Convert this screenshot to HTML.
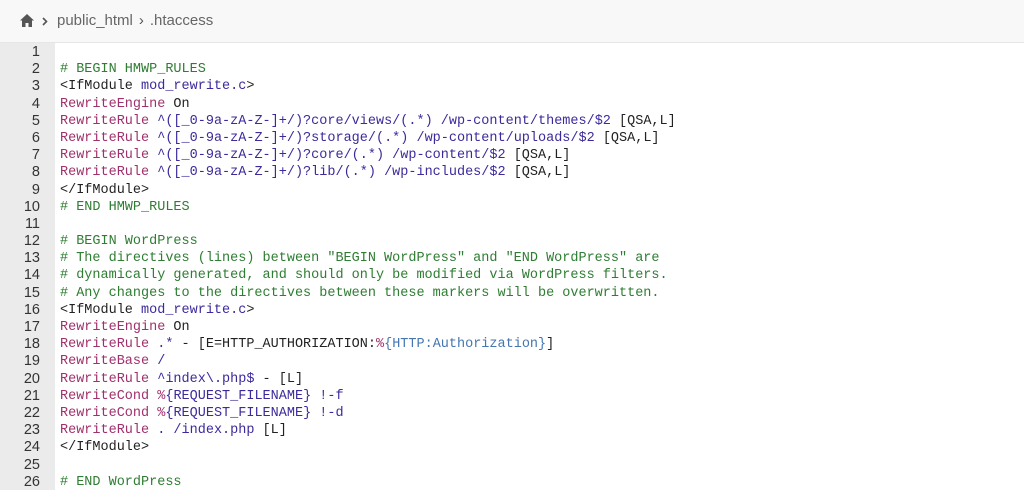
<!DOCTYPE html>
<html><head><meta charset="utf-8"><style>
body{margin:0;width:1024px;height:490px;overflow:hidden;background:#fff;font-family:"Liberation Sans",sans-serif}
.hdr{height:42px;background:#f8f8f8;border-bottom:1px solid #e6e6e6;position:relative}
.hdr .t{position:absolute;left:57px;top:12px;font-size:15px;color:#666}
.hdr .s{display:inline-block;margin:0 6px;color:#555}
.gut{position:absolute;left:0;top:43px;width:55px;height:447px;background:#ebebeb}
.nums{position:absolute;left:0;top:44px;width:40px;text-align:right;font-size:14.5px;line-height:17.2px;color:#333}
.nums div,.code div{height:17.2px}
.code{position:absolute;left:60px;top:44px;font-family:"Liberation Mono",monospace;font-size:13.5px;line-height:17.2px;color:#222}
.code div{white-space:pre}
.c{color:#2e7d32}.k{color:#a0306c}.b{color:#3c2a9c}.v{color:#4576b0}
</style></head><body>
<div class="hdr">
<svg style="position:absolute;left:19px;top:13px" width="16" height="15" viewBox="0 0 16 15"><path d="M8 1 L1 7.5 H3 V14 H6.5 V10 H9.5 V14 H13 V7.5 H15 Z" fill="#555"/></svg>
<svg style="position:absolute;left:42px;top:17px" width="6" height="9" viewBox="0 0 6 9"><path d="M1 1 L4.5 4.5 L1 8" stroke="#555" stroke-width="1.6" fill="none"/></svg>
<span class="t">public_html<span class="s">›</span>.htaccess</span>
</div>
<div class="gut"></div>
<div class="nums"><div>1</div><div>2</div><div>3</div><div>4</div><div>5</div><div>6</div><div>7</div><div>8</div><div>9</div><div>10</div><div>11</div><div>12</div><div>13</div><div>14</div><div>15</div><div>16</div><div>17</div><div>18</div><div>19</div><div>20</div><div>21</div><div>22</div><div>23</div><div>24</div><div>25</div><div>26</div></div>
<div class="code"><div> </div><div><span class="c"># BEGIN HMWP_RULES</span></div><div>&lt;IfModule <span class="b">mod_rewrite.c</span>&gt;</div><div><span class="k">RewriteEngine</span> On</div><div><span class="k">RewriteRule</span> <span class="b">^([_0-9a-zA-Z-]+/)?core/views/(.*) /wp-content/themes/$2</span> [QSA,L]</div><div><span class="k">RewriteRule</span> <span class="b">^([_0-9a-zA-Z-]+/)?storage/(.*) /wp-content/uploads/$2</span> [QSA,L]</div><div><span class="k">RewriteRule</span> <span class="b">^([_0-9a-zA-Z-]+/)?core/(.*) /wp-content/$2</span> [QSA,L]</div><div><span class="k">RewriteRule</span> <span class="b">^([_0-9a-zA-Z-]+/)?lib/(.*) /wp-includes/$2</span> [QSA,L]</div><div>&lt;/IfModule&gt;</div><div><span class="c"># END HMWP_RULES</span></div><div> </div><div><span class="c"># BEGIN WordPress</span></div><div><span class="c"># The directives (lines) between "BEGIN WordPress" and "END WordPress" are</span></div><div><span class="c"># dynamically generated, and should only be modified via WordPress filters.</span></div><div><span class="c"># Any changes to the directives between these markers will be overwritten.</span></div><div>&lt;IfModule <span class="b">mod_rewrite.c</span>&gt;</div><div><span class="k">RewriteEngine</span> On</div><div><span class="k">RewriteRule</span> <span class="b">.*</span> - [E=HTTP_AUTHORIZATION:<span class="k">%</span><span class="v">{HTTP:Authorization}</span>]</div><div><span class="k">RewriteBase</span> <span class="b">/</span></div><div><span class="k">RewriteRule</span> <span class="b">^index\.php$</span> - [L]</div><div><span class="k">RewriteCond</span> <span class="k">%</span><span class="b">{REQUEST_FILENAME}</span> <span class="b">!-f</span></div><div><span class="k">RewriteCond</span> <span class="k">%</span><span class="b">{REQUEST_FILENAME}</span> <span class="b">!-d</span></div><div><span class="k">RewriteRule</span> <span class="b">. /index.php</span> [L]</div><div>&lt;/IfModule&gt;</div><div> </div><div><span class="c"># END WordPress</span></div></div>
</body></html>
